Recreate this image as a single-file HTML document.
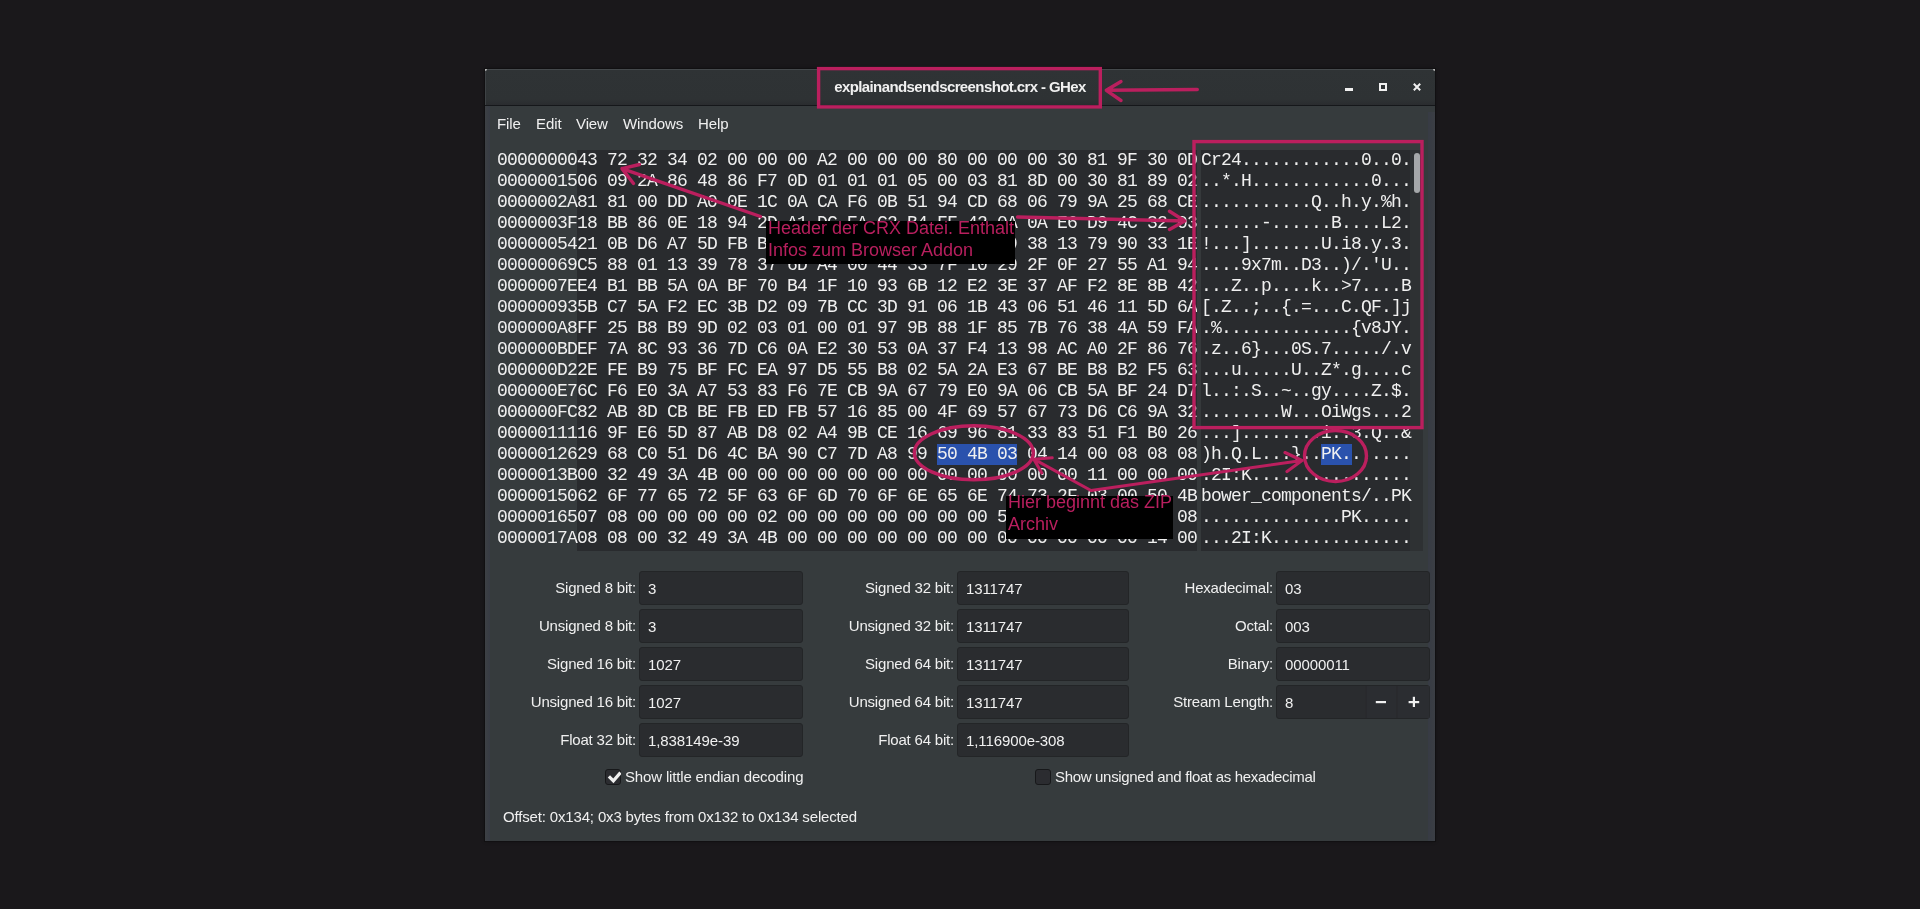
<!DOCTYPE html>
<html><head><meta charset="utf-8">
<style>
html,body{margin:0;padding:0;}
body{width:1920px;height:909px;background:#1a181b;position:relative;overflow:hidden;font-family:"Liberation Sans",sans-serif;}
.abs{position:absolute;}
#win{left:485px;top:69px;width:950px;height:772px;background:#363b3d;box-shadow:0 0 0 1px #111012,0 0 4px rgba(0,0,0,0.4);}
#title{left:0;top:0;width:950px;height:36px;background:linear-gradient(#2f3335 0,#2e3234 30px,#2a2c2f 36px);border-bottom:1px solid #15171a;}
#ttext{left:0;top:0;width:950px;text-align:center;color:#f0f0f0;font-weight:bold;font-size:15px;line-height:36px;letter-spacing:-0.6px;will-change:transform;}
.menu{top:35px;height:40px;color:#f0f0f0;font-size:15px;line-height:40px;letter-spacing:-0.1px;will-change:transform;}
.mono{font-family:"Liberation Mono",monospace;font-size:18px;letter-spacing:-0.8px;will-change:transform;line-height:21px;color:#f0f0f0;white-space:pre;margin:0;}
#hexbg{left:92px;top:81px;width:620px;height:401px;background:#292b2e;}
#sep{left:712px;top:81px;width:4px;height:401px;background:#35393b;}
#ascbg{left:716px;top:81px;width:209px;height:401px;background:#292b2e;}
#trough{left:925px;top:81px;width:13px;height:401px;background:#2e3133;}
#thumb{left:929px;top:84px;width:6px;height:40px;background:#a5a8aa;border-radius:3px;}
.sel{background:transparent;}
.selbg{background:#2a52ad;height:21px;}
.lbl{color:#f0f0f0;font-size:15px;text-align:right;line-height:34px;height:34px;letter-spacing:-0.2px;will-change:transform;}
.ent{height:32px;background:#2a2c2f;border:1px solid #232527;border-radius:3px;color:#f0f0f0;font-size:15px;line-height:32px;box-sizing:content-box;letter-spacing:-0.1px;}
.ent span{will-change:transform;display:inline-block;}
.ent span{padding-left:8px;position:relative;top:1px;}
.chk{width:14px;height:14px;background:#2b2c30;border:1px solid #17181a;border-radius:3px;}
.ctext{color:#f0f0f0;font-size:15px;line-height:20px;letter-spacing:-0.1px;will-change:transform;}
.ann{font-size:18px;line-height:22px;color:#b81f5e;white-space:nowrap;will-change:transform;}
.box{background:#000;}
</style></head>
<body>
<div id="win" class="abs">
  <div id="title" class="abs"></div>
  <div class="abs" style="left:0;top:37px;width:5px;height:735px;background:linear-gradient(90deg,#3d4044,#373b44)"></div>
  <div class="abs" style="left:943px;top:43px;width:7px;height:729px;background:linear-gradient(90deg,#373b44,#3b3e44)"></div>
  <div id="ttext" class="abs">explainandsendscreenshot.crx - GHex</div>
  <svg class="abs" style="left:0;top:0" width="950" height="36">
    <rect x="860" y="19" width="8" height="3" fill="#f0f0f0"/>
    <rect x="895" y="15" width="6" height="6" fill="none" stroke="#f0f0f0" stroke-width="2"/>
    <path d="M928.8 14.8 L935.2 21.2 M935.2 14.8 L928.8 21.2" stroke="#f0f0f0" stroke-width="2" fill="none"/>
  </svg>
  <div class="abs menu" style="left:12px">File</div>
  <div class="abs menu" style="left:51px">Edit</div>
  <div class="abs menu" style="left:91px">View</div>
  <div class="abs menu" style="left:138px">Windows</div>
  <div class="abs menu" style="left:213px">Help</div>

  <div id="hexbg" class="abs"></div>
  <div id="sep" class="abs"></div>
  <div id="ascbg" class="abs"></div>
  <div id="trough" class="abs"></div>
  <div id="thumb" class="abs"></div>
  <div class="abs selbg" style="left:452px;top:375px;width:80px"></div>
  <div class="abs selbg" style="left:836px;top:375px;width:31px"></div>
  <div class="abs" style="left:0;top:0;width:950px;height:1px;background:#45494c"></div>
  <div class="abs" style="left:0;top:0;width:1px;height:36px;background:#3e4245"></div>
  <div class="abs" style="left:0;top:0;width:2px;height:2px;background:#b8b8b8;border-bottom-right-radius:2px"></div>
  <div class="abs" style="left:948px;top:0;width:2px;height:2px;background:#b8b8b8;border-bottom-left-radius:2px"></div>
  <pre class="abs mono" style="left:12px;top:81px">00000000
00000015
0000002A
0000003F
00000054
00000069
0000007E
00000093
000000A8
000000BD
000000D2
000000E7
000000FC
00000111
00000126
0000013B
00000150
00000165
0000017A</pre>
  <pre class="abs mono" style="left:92px;top:81px;width:620px;overflow:hidden">43 72 32 34 02 00 00 00 A2 00 00 00 80 00 00 00 30 81 9F 30 0D
06 09 2A 86 48 86 F7 0D 01 01 01 05 00 03 81 8D 00 30 81 89 02
81 81 00 DD A0 0E 1C 0A CA F6 0B 51 94 CD 68 06 79 9A 25 68 CE
18 BB 86 0E 18 94 2D A1 DC EA C2 B4 FF 42 0A 0A E6 D9 4C 32 03
21 0B D6 A7 5D FB B8 E9 C4 0F 8A 9C 55 D2 69 38 13 79 90 33 1E
C5 88 01 13 39 78 37 6D A4 00 44 33 7F 10 29 2F 0F 27 55 A1 94
E4 B1 BB 5A 0A BF 70 B4 1F 10 93 6B 12 E2 3E 37 AF F2 8E 8B 42
5B C7 5A F2 EC 3B D2 09 7B CC 3D 91 06 1B 43 06 51 46 11 5D 6A
FF 25 B8 B9 9D 02 03 01 00 01 97 9B 88 1F 85 7B 76 38 4A 59 FA
EF 7A 8C 93 36 7D C6 0A E2 30 53 0A 37 F4 13 98 AC A0 2F 86 76
2E FE B9 75 BF FC EA 97 D5 55 B8 02 5A 2A E3 67 BE B8 B2 F5 63
6C F6 E0 3A A7 53 83 F6 7E CB 9A 67 79 E0 9A 06 CB 5A BF 24 D7
82 AB 8D CB BE FB ED FB 57 16 85 00 4F 69 57 67 73 D6 C6 9A 32
16 9F E6 5D 87 AB D8 02 A4 9B CE 16 69 96 81 33 83 51 F1 B0 26
29 68 C0 51 D6 4C BA 90 C7 7D A8 99 <span class="sel">50 4B 03</span> 04 14 00 08 08 08
00 32 49 3A 4B 00 00 00 00 00 00 00 00 00 00 00 00 11 00 00 00
62 6F 77 65 72 5F 63 6F 6D 70 6F 6E 65 6E 74 73 2F 03 00 50 4B
07 08 00 00 00 00 02 00 00 00 00 00 00 00 50 4B 03 04 14 00 08
08 08 00 32 49 3A 4B 00 00 00 00 00 00 00 00 00 00 00 00 14 00</pre>
  <pre class="abs mono" style="left:716px;top:81px">Cr24............0..0.
..*.H............0...
...........Q..h.y.%h.
......-......B....L2.
!...].......U.i8.y.3.
....9x7m..D3..)/.'U..
...Z..p....k..&gt;7....B
[.Z..;..{.=...C.QF.]j
.%.............{v8JY.
.z..6}...0S.7...../.v
...u.....U..Z*.g....c
l..:.S..~..gy....Z.$.
........W...OiWgs...2
...]........i..3.Q..&amp;
)h.Q.L...}..<span class="sel">PK.</span>......
.2I:K................
bower_components/..PK
..............PK.....
...2I:K..............</pre>

  <!-- left column -->
  <div class="abs lbl" style="left:0;width:151px;top:502px">Signed 8 bit:</div>
  <div class="abs lbl" style="left:0;width:151px;top:540px">Unsigned 8 bit:</div>
  <div class="abs lbl" style="left:0;width:151px;top:578px">Signed 16 bit:</div>
  <div class="abs lbl" style="left:0;width:151px;top:616px">Unsigned 16 bit:</div>
  <div class="abs lbl" style="left:0;width:151px;top:654px">Float 32 bit:</div>
  <div class="abs ent" style="left:154px;width:162px;top:502px"><span>3</span></div>
  <div class="abs ent" style="left:154px;width:162px;top:540px"><span>3</span></div>
  <div class="abs ent" style="left:154px;width:162px;top:578px"><span>1027</span></div>
  <div class="abs ent" style="left:154px;width:162px;top:616px"><span>1027</span></div>
  <div class="abs ent" style="left:154px;width:162px;top:654px"><span>1,838149e-39</span></div>
  <!-- middle column -->
  <div class="abs lbl" style="left:300px;width:169px;top:502px">Signed 32 bit:</div>
  <div class="abs lbl" style="left:300px;width:169px;top:540px">Unsigned 32 bit:</div>
  <div class="abs lbl" style="left:300px;width:169px;top:578px">Signed 64 bit:</div>
  <div class="abs lbl" style="left:300px;width:169px;top:616px">Unsigned 64 bit:</div>
  <div class="abs lbl" style="left:300px;width:169px;top:654px">Float 64 bit:</div>
  <div class="abs ent" style="left:472px;width:170px;top:502px"><span>1311747</span></div>
  <div class="abs ent" style="left:472px;width:170px;top:540px"><span>1311747</span></div>
  <div class="abs ent" style="left:472px;width:170px;top:578px"><span>1311747</span></div>
  <div class="abs ent" style="left:472px;width:170px;top:616px"><span>1311747</span></div>
  <div class="abs ent" style="left:472px;width:170px;top:654px"><span>1,116900e-308</span></div>
  <!-- right column -->
  <div class="abs lbl" style="left:650px;width:138px;top:502px">Hexadecimal:</div>
  <div class="abs lbl" style="left:650px;width:138px;top:540px">Octal:</div>
  <div class="abs lbl" style="left:650px;width:138px;top:578px">Binary:</div>
  <div class="abs lbl" style="left:650px;width:138px;top:616px">Stream Length:</div>
  <div class="abs ent" style="left:791px;width:152px;top:502px"><span>03</span></div>
  <div class="abs ent" style="left:791px;width:152px;top:540px"><span>003</span></div>
  <div class="abs ent" style="left:791px;width:152px;top:578px"><span>00000011</span></div>
  <div class="abs ent" style="left:791px;width:152px;top:616px"><span>8</span></div>
  <svg class="abs" style="left:880px;top:616px" width="65" height="34">
    <rect x="0.7" y="1" width="30.8" height="32" fill="#2b2d31"/>
    <rect x="31.5" y="1" width="33" height="32" fill="#2b2d31"/>
    <rect x="0.7" y="1" width="1" height="32" fill="#28292d"/>
    <rect x="31.5" y="1" width="1" height="32" fill="#28292d"/>
    <rect x="10.8" y="16" width="10.2" height="2.2" fill="#f0f0f0"/>
    <rect x="43.6" y="16" width="10.6" height="2.2" fill="#f0f0f0"/>
    <rect x="47.8" y="11.8" width="2.2" height="10.2" fill="#f0f0f0"/>
  </svg>
  <!-- checkboxes -->
  <div class="abs chk" style="left:120px;top:700px"></div>
  <svg class="abs" style="left:120px;top:700px" width="16" height="16"><path d="M3.9 7.3 L8.4 11.9 L15.5 3.6" stroke="#f0f0f0" stroke-width="3.2" fill="none"/></svg>
  <div class="abs ctext" style="left:140px;top:698px;letter-spacing:-0.16px">Show little endian decoding</div>
  <div class="abs chk" style="left:550px;top:700px"></div>
  <div class="abs ctext" style="left:570px;top:698px;letter-spacing:-0.32px">Show unsigned and float as hexadecimal</div>
  <!-- status -->
  <div class="abs ctext" style="left:18px;top:738px;letter-spacing:-0.16px">Offset: 0x134; 0x3 bytes from 0x132 to 0x134 selected</div>
</div>

<!-- annotations -->
<svg class="abs" style="left:0;top:0" width="1920" height="909">
  <g stroke="#bb1f5e" stroke-width="3.4" fill="none" stroke-linecap="round" stroke-linejoin="round">
    <rect x="818.6" y="68.6" width="281.7" height="38.3" stroke-linejoin="miter"/>
    <path d="M1197.3 89.5 L1106.3 90.3 M1121 81.5 L1106.3 90.3 L1121 100.5"/>
    <rect x="1194" y="141.6" width="228" height="286" stroke-linejoin="miter"/>
    <path d="M760.5 216.5 L622 168.6 M639.5 164.5 L622 168.6 L633.5 183.5"/>
    <path d="M1017.5 217 L1184.8 221 M1169.5 211.2 L1184.8 221 L1169.5 229.5"/>
    <ellipse cx="973.8" cy="452.8" rx="59.5" ry="27"/>
    <ellipse cx="1335.5" cy="456" rx="31" ry="25.5"/>
    <path d="M1091 490.5 L1033.8 459.2 M1052.2 457.8 L1033.8 459.2 L1041.8 473" stroke-width="3.1"/>
    <path d="M1091 490.5 L1302 460.5 M1285 452.5 L1302 460.5 L1287 471.5" stroke-width="3.1"/>
  </g>
</svg>
<div class="abs box" style="left:766px;top:221px;width:249px;height:43px"></div>
<div class="abs ann" style="left:768px;top:217px">Header der CRX Datei. Enthalt</div>
<div class="abs ann" style="left:768px;top:239px">Infos zum Browser Addon</div>
<div class="abs box" style="left:1006px;top:496px;width:167px;height:43px"></div>
<div class="abs ann" style="left:1008px;top:491px">Hier beginnt das ZIP</div>
<div class="abs ann" style="left:1008px;top:513px">Archiv</div>
</body></html>
